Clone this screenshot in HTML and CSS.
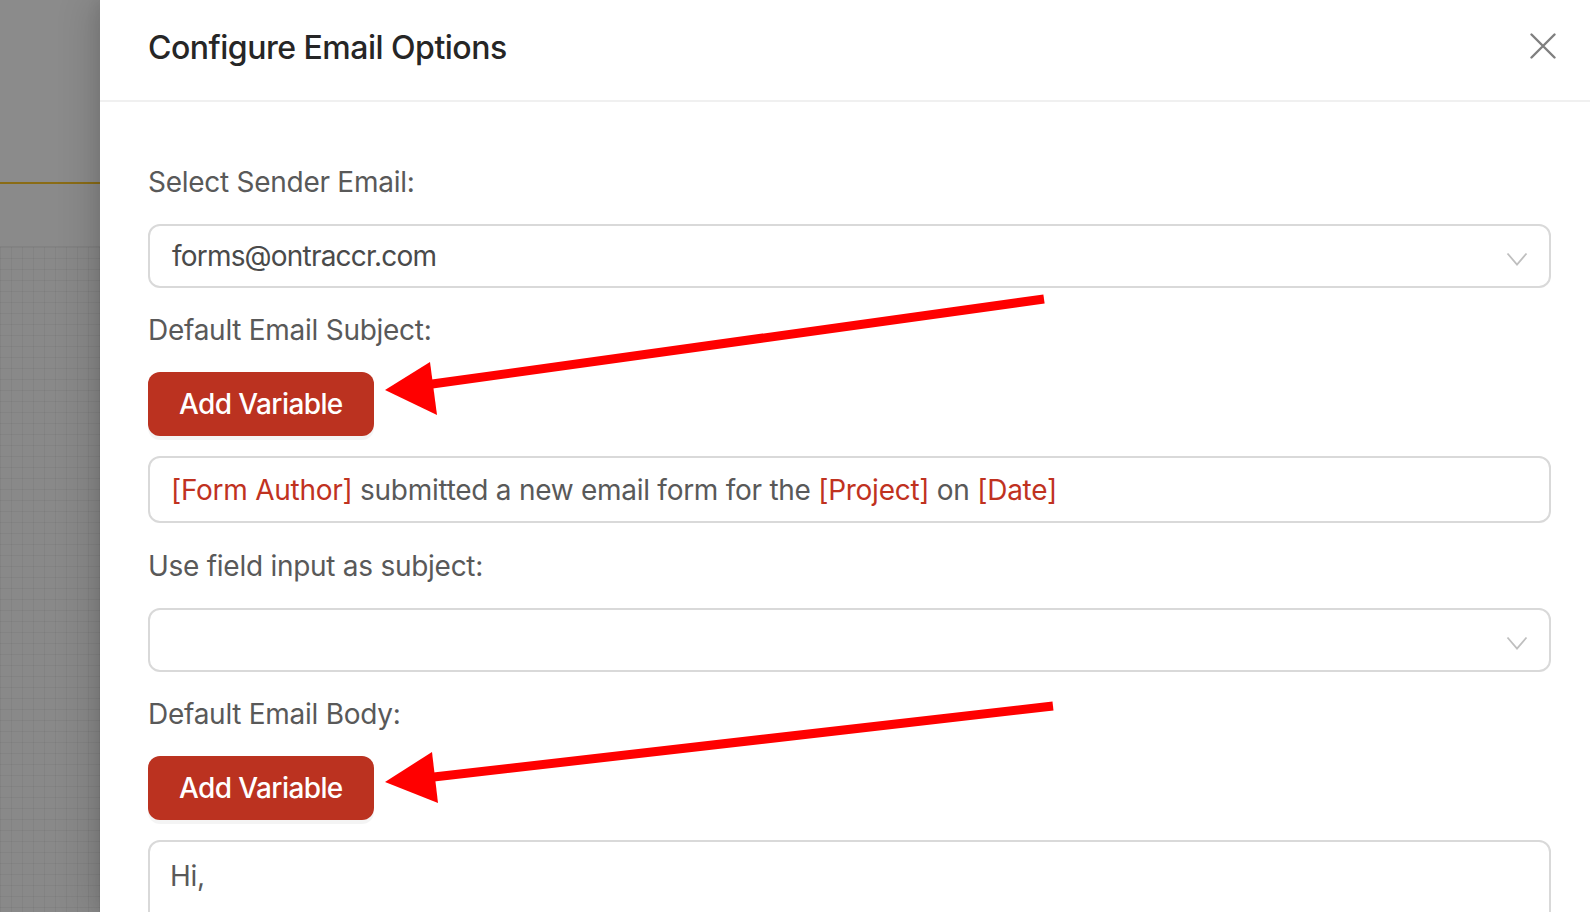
FILE: index.html
```html
<!DOCTYPE html>
<html lang="en">
<head>
<meta charset="utf-8">
<title>Configure Email Options</title>
<link rel="stylesheet" href="styles.css">
</head>
<body>
<div class="page">
  <div class="backdrop">
    <div class="bd-top"></div>
    <div class="bd-line"></div>
    <div class="bd-mid"></div>
    <div class="bd-grid"></div>
  </div>
  <aside class="drawer">
    <header class="drawer-header">
      <h1 class="drawer-title">Configure Email Options</h1>
      <button class="close-btn" aria-label="Close">
        <svg width="26" height="26" viewBox="0 0 26 26"><path d="M1.5 1.5 L24.5 24.5 M24.5 1.5 L1.5 24.5" stroke="#7f7f7f" stroke-width="2.4" stroke-linecap="round" fill="none"/></svg>
      </button>
    </header>
    <div class="drawer-body">
      <div class="label">Select Sender Email:</div>
      <div class="select">
        <span class="select-value">forms@ontraccr.com</span>
        <svg class="chevron" width="22" height="14" viewBox="0 0 22 14"><path d="M1.5 1.5 L11 12.5 L20.5 1.5" stroke="#bfbfbf" stroke-width="1.8" fill="none"/></svg>
      </div>
      <div class="label">Default Email Subject:</div>
      <div><button class="add-var">Add Variable</button></div>
      <div class="text-input"><span class="var">[Form Author]</span> submitted a new email form for the <span class="var">[Project]</span> on <span class="var">[Date]</span></div>
      <div class="label label-gap">Use field input as subject:</div>
      <div class="select">
        <span class="select-value"></span>
        <svg class="chevron" width="22" height="14" viewBox="0 0 22 14"><path d="M1.5 1.5 L11 12.5 L20.5 1.5" stroke="#bfbfbf" stroke-width="1.8" fill="none"/></svg>
      </div>
      <div class="label">Default Email Body:</div>
      <div><button class="add-var">Add Variable</button></div>
      <div class="textarea">Hi,</div>
    </div>
  </aside>
  <svg class="annotations" width="1590" height="912" viewBox="0 0 1590 912">
    <line x1="1044" y1="299" x2="425" y2="385" stroke="#ff0000" stroke-width="9"/>
    <polygon points="385,390 430,362 437,415" fill="#ff0000"/>
    <line x1="1053" y1="706" x2="425" y2="778" stroke="#ff0000" stroke-width="9"/>
    <polygon points="385,782 432,752 438,803" fill="#ff0000"/>
  </svg>
</div>
</body>
</html>
```
FILE: styles.css
```css
* { box-sizing: border-box; }
html, body { margin: 0; padding: 0; }
body {
  width: 1590px;
  height: 912px;
  overflow: hidden;
  font-family: Inter, "Noto Sans", sans-serif;
  background: #8a8a8a;
}
.page {
  position: relative;
  display: flex;
  width: 1590px;
  height: 912px;
  overflow: hidden;
}
.backdrop {
  width: 100px;
  flex: none;
  display: flex;
  flex-direction: column;
  background: #8a8a8a;
}
.bd-top { height: 182px; background: #8b8b8b; }
.bd-line { height: 2px; background: #8a6c16; }
.bd-mid { height: 63px; background: #8a8a8a; border-bottom: 1px solid #828282; }
.bd-grid {
  flex: 1;
  background-color: #898989;
  background-image:
    linear-gradient(to right, rgba(0,0,0,0.045) 1px, transparent 1px),
    linear-gradient(to bottom, rgba(0,0,0,0.045) 1px, transparent 1px);
  background-size: 11px 11px;
}
.drawer {
  flex: 1;
  background: #ffffff;
  display: flex;
  flex-direction: column;
  box-shadow: -12px 0 32px 0 rgba(0,0,0,0.12), -4px 0 10px 0 rgba(0,0,0,0.06);
  position: relative;
}
.drawer-header {
  height: 102px;
  flex: none;
  display: flex;
  align-items: center;
  justify-content: space-between;
  padding: 0 34px 0 48px;
  border-bottom: 2px solid #f0f0f0;
}
.drawer-title {
  margin: 0;
  font-size: 32px;
  font-weight: 500;
  color: #262626;
  letter-spacing: -0.5px;
  padding-bottom: 6px;
}
.close-btn {
  border: 0;
  background: none;
  padding: 0;
  width: 26px;
  height: 26px;
  display: flex;
  margin-bottom: 8px;
}
.drawer-body {
  padding: 58px 39px 0 48px;
  display: flex;
  flex-direction: column;
  gap: 20px;
}
.label {
  font-size: 28px;
  line-height: 44px;
  color: #595959;
  letter-spacing: -0.27px;
}
.label-gap { margin-top: 1px; }
.select {
  height: 64px;
  border: 2px solid #d9d9d9;
  border-radius: 12px;
  display: flex;
  align-items: center;
  justify-content: space-between;
  padding: 0 21px 0 22px;
}
.select-value {
  font-size: 28px;
  color: #4a4a4a;
  letter-spacing: -0.8px;
}
.chevron { display: block; margin-top: 6px; }
.add-var {
  height: 64px;
  padding: 0 31px;
  border: 0;
  border-radius: 12px;
  background: #bb3220;
  color: #ffffff;
  font-family: Inter, "Noto Sans", sans-serif;
  font-size: 28px;
  font-weight: 450;
  letter-spacing: -0.6px;
  box-shadow: 0 4px 0 rgba(0,0,0,0.045);
}
.text-input {
  height: 67px;
  border: 2px solid #d9d9d9;
  border-radius: 12px;
  display: flex;
  align-items: center;
  padding: 0 21px;
  font-size: 28px;
  color: #595959;
  letter-spacing: -0.27px;
  white-space: pre;
}
.var { color: #c0321f; }
.textarea {
  height: 200px;
  border: 2px solid #d9d9d9;
  border-radius: 12px;
  padding: 17px 20px;
  font-size: 28px;
  color: #595959;
  letter-spacing: -0.27px;
}
.annotations {
  position: absolute;
  left: 0;
  top: 0;
  pointer-events: none;
}
```
